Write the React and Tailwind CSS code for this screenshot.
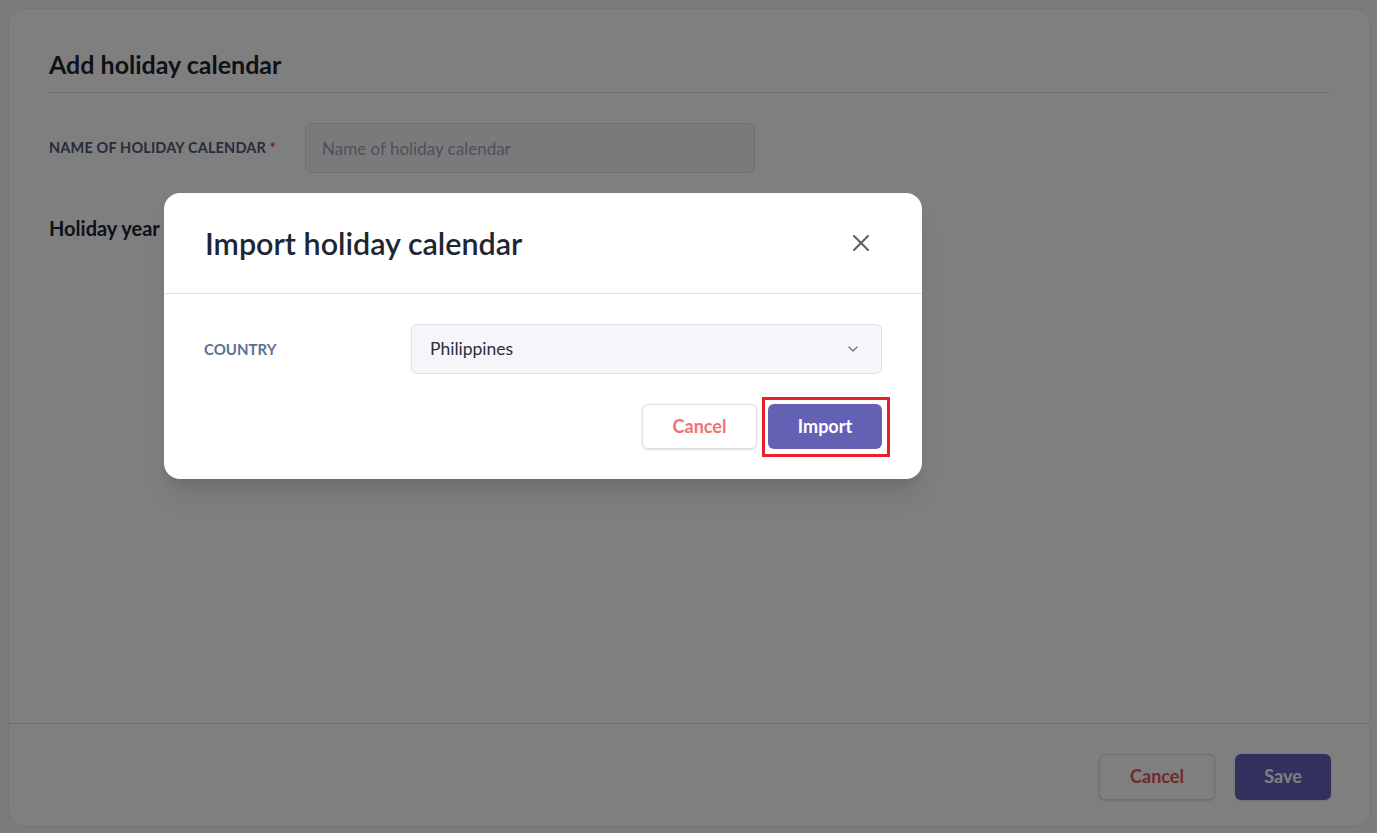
import { X, ChevronDown } from 'lucide-react'

export default function App() {
    return (
        <div className="relative w-[1377px] h-[833px] bg-[#f8f8fd] pl-2 pr-[6px] pt-2 pb-[6px] overflow-hidden" style={{ fontFamily: 'Lato, "Open Sans", sans-serif' }}>
            {/* Page card */}
            <div className="h-full flex flex-col bg-white rounded-2xl border border-[#ececf2]">
                <div className="flex-1 px-10 pt-[37px]">
                    <h1 className="text-[25px] font-bold text-[#1d2430] leading-[36px] pb-[10px] border-b border-[#dcdce2]">Add holiday calendar</h1>
                    <div className="flex items-center mt-[30px]">
                        <label className="w-[256px] text-[14.5px] font-bold uppercase text-[#4d5a70] tracking-[0.01em]">
                            Name of holiday calendar <span className="text-[#e5484d]">*</span>
                        </label>
                        <input
                            className="w-[450px] h-[50px] rounded-md border border-[#dddde6] bg-[#f5f5fa] px-4 text-[17px] placeholder:text-[#9ea3ad] outline-none"
                            placeholder="Name of holiday calendar"
                        />
                    </div>
                    <h2 className="mt-[40px] text-[20px] font-bold text-[#1d2430] leading-[30px]">Holiday year</h2>
                </div>
                <div className="h-[103px] border-t border-[#dcdce2] flex items-center justify-end gap-5 pr-[39px] pt-[3px]">
                    <button className="w-[116px] h-[46px] rounded-md border border-[#dcdce4] bg-white text-[18px] font-bold text-[#e4525a] shadow-sm">Cancel</button>
                    <button className="w-[96px] h-[46px] rounded-md bg-[#6660bd] text-[18px] font-bold text-white shadow-sm">Save</button>
                </div>
            </div>

            {/* Overlay */}
            <div className="absolute inset-0 bg-black/50">
                <div className="absolute left-[164px] top-[193px] w-[758px] bg-white rounded-2xl shadow-xl">
                    <div className="h-[101px] flex items-center justify-between pl-[41px] pr-[47px] border-b border-[#dfe0e6]">
                        <h3 className="text-[30.5px] font-semibold text-[#1f2633] pt-[1px]">Import holiday calendar</h3>
                        <X size={28} strokeWidth={1.8} className="text-[#5f6168]" />
                    </div>
                    <div className="px-10 pt-[30px] pb-[30px]">
                        <div className="flex items-center">
                            <span className="w-[207px] text-[15px] font-bold uppercase text-[#5b7191]">Country</span>
                            <div className="w-[471px] h-[50px] rounded-md border border-[#dfe0e8] bg-[#f5f5fa] flex items-center justify-between pl-[18px] pr-[20px]">
                                <span className="text-[17.5px] text-[#2a2f38]">Philippines</span>
                                <ChevronDown size={16} strokeWidth={1.8} className="text-[#6a6d75]" />
                            </div>
                        </div>
                        <div className="flex justify-end items-center gap-[11px] mt-[30px]">
                            <button className="w-[115px] h-[45px] rounded-md border border-[#dcdfe6] bg-white text-[18px] font-bold text-[#f26f73] shadow-sm">Cancel</button>
                            <div className="relative">
                                <button className="w-[114px] h-[45px] rounded-md bg-[#6461b5] text-[18px] font-bold text-white">Import</button>
                                <div className="absolute -left-[6px] -top-[7px] -right-[8px] -bottom-[8px] border-[3px] border-[#e8202a] pointer-events-none" />
                            </div>
                        </div>
                    </div>
                </div>
            </div>
        </div>
    )
}
